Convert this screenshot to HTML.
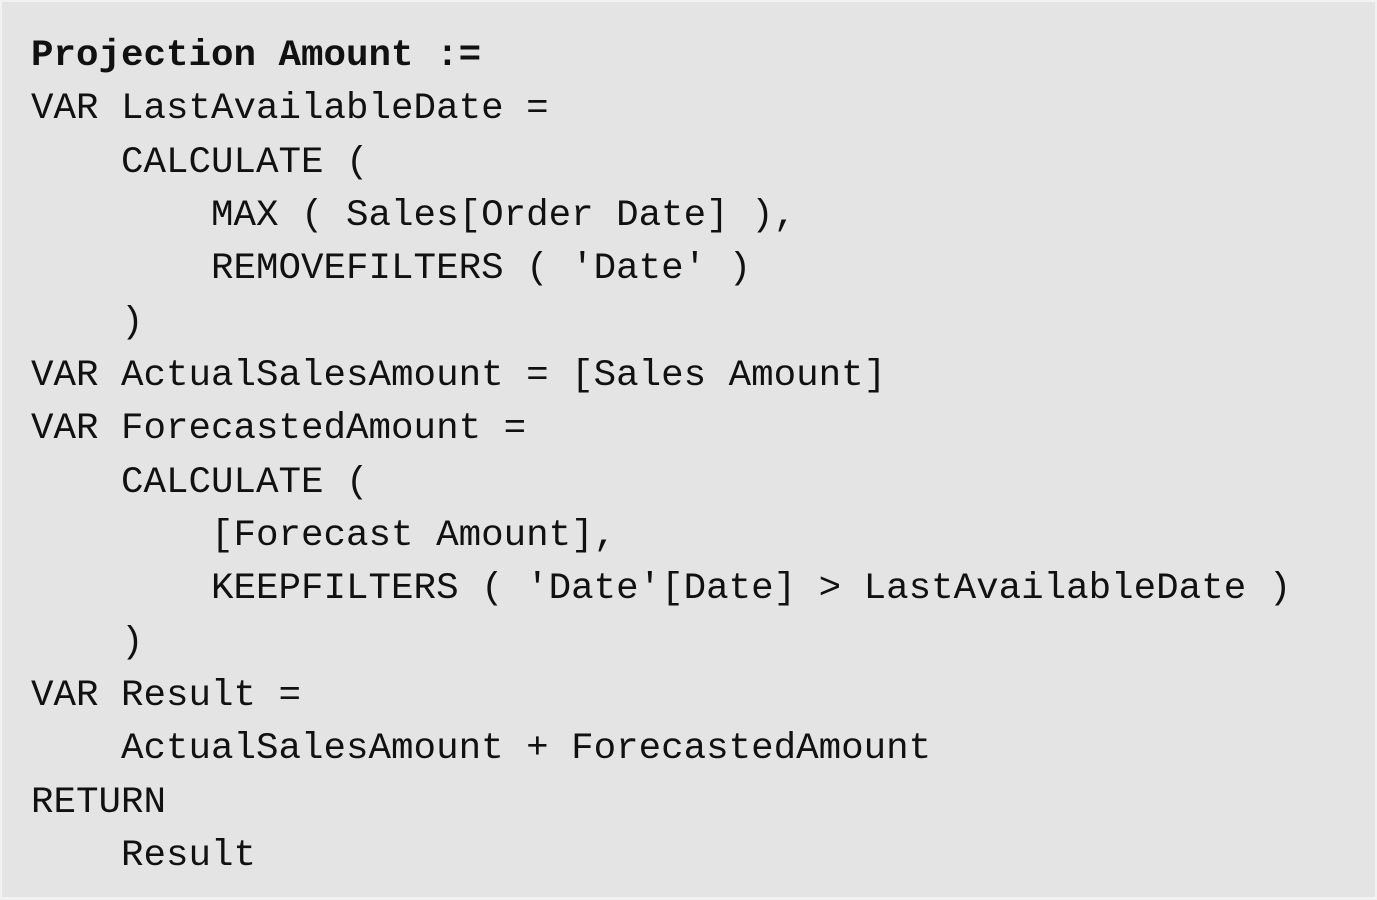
<!DOCTYPE html>
<html><head><style>
html,body{margin:0;padding:0;background:#f2f2f2;}
.box{position:absolute;left:2px;top:2px;width:1373px;height:895px;background:#e4e4e4;}
pre{position:absolute;left:31px;top:30px;margin:0;font-family:"Liberation Mono",monospace;font-size:37.5px;line-height:53.35px;color:#111;}
b{font-weight:bold;}
</style></head><body><div class="box"></div>
<pre><b>Projection Amount :=</b>
VAR LastAvailableDate =
    CALCULATE (
        MAX ( Sales[Order Date] ),
        REMOVEFILTERS ( 'Date' )
    )
VAR ActualSalesAmount = [Sales Amount]
VAR ForecastedAmount =
    CALCULATE (
        [Forecast Amount],
        KEEPFILTERS ( 'Date'[Date] &gt; LastAvailableDate )
    )
VAR Result =
    ActualSalesAmount + ForecastedAmount
RETURN
    Result</pre>
</body></html>
